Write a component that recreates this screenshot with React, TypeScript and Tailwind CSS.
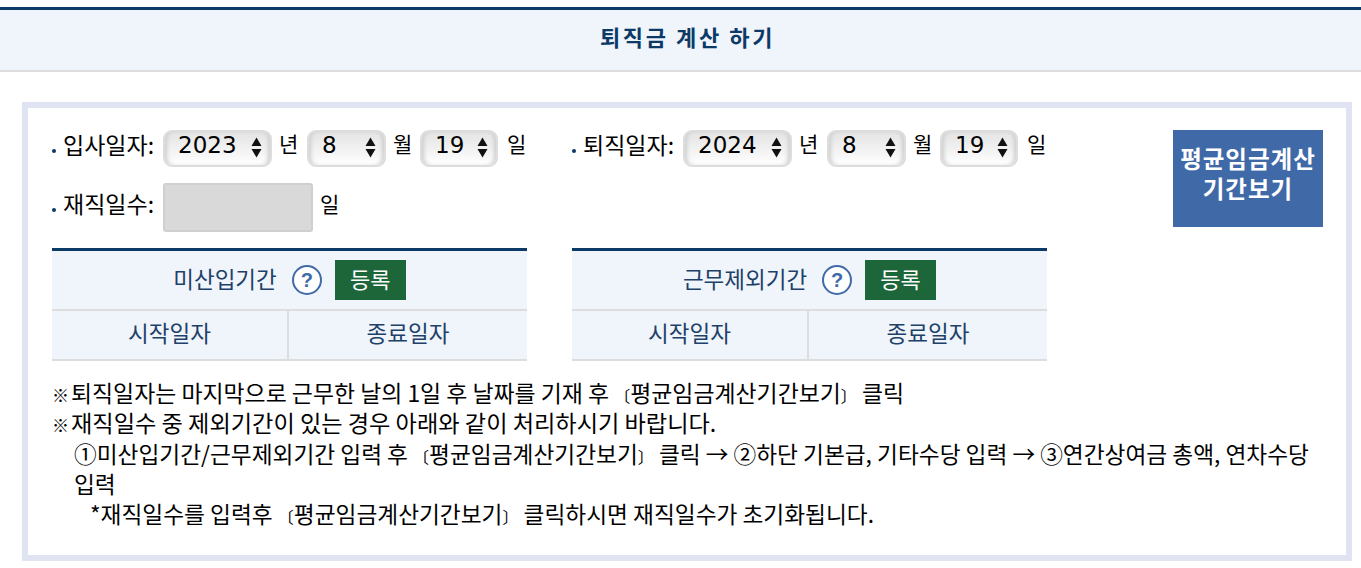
import React from "react";

const years = ["2023", "2024"];

function DateSelect({ value, width }: { value: string; width: string }) {
    return (
        <div className={`relative h-[37px] ${width} rounded-[9px] border-2 border-[#dddddd] bg-gradient-to-b from-[#e4e4e4] via-[#f1f1f1] to-white shadow-[inset_4px_0_4px_-2px_#cdcdcd,inset_-4px_0_4px_-2px_#cdcdcd]`}>
            <select
                defaultValue={value}
                className="h-full w-full appearance-none bg-transparent pb-[6px] pl-[13px] font-['DejaVu_Sans',sans-serif] text-[23px] leading-none text-black outline-none"
            >
                <option value={value}>{value}</option>
            </select>
            <svg className="pointer-events-none absolute right-[8px] top-[5px]" width="11" height="21" viewBox="0 0 11 21">
                <path d="M5.5 0.5 L10.5 9 L0.5 9 Z M0.5 12 L10.5 12 L5.5 20.5 Z" fill="#111" />
            </svg>
        </div>
    );
}

function DateField({ label, year }: { label: string; year: string }) {
    return (
        <div className="flex h-[37px] items-center">
            <span className="mr-[7px] mt-[4px] h-[4px] w-[4px] rounded-full bg-[#0b3a66]" />
            <span className="mb-[9px] w-[100px] text-[23px] leading-none">{label}</span>
            <DateSelect value={year} width="w-[109px]" />
            <span className="mb-[10px] ml-[7px] w-[28px] text-[21px] leading-none">년</span>
            <DateSelect value="8" width="w-[79px]" />
            <span className="mb-[10px] ml-[7px] w-[27px] text-[21px] leading-none">월</span>
            <DateSelect value="19" width="w-[78px]" />
            <span className="mb-[10px] ml-[9px] text-[21px] leading-none">일</span>
        </div>
    );
}

function PeriodTable({ title }: { title: string }) {
    return (
        <div className="border-t-[3px] border-[#0b3a66] bg-[#f0f4fb] text-[#1d4168]">
            <div className="flex h-[60px] items-center justify-center border-b-2 border-[#dddddd]">
                <span className="mb-[4px] text-[22.5px] leading-none">{title}</span>
                <span className="ml-[15px] flex h-[30px] w-[30px] items-center justify-center rounded-full border-2 border-[#4069a8] bg-white font-['Liberation_Sans',sans-serif] text-[20px] font-bold leading-none text-[#4069a8]">?</span>
                <button className="ml-[13px] h-[40px] w-[71px] bg-[#1c6639] pb-[4px] text-[22px] leading-none text-white">등록</button>
            </div>
            <div className="grid h-[50px] grid-cols-[237px_1fr] border-b-2 border-[#dddddd] pb-[4px] text-[22.5px]">
                <div className="-mb-[4px] flex items-center justify-center border-r-2 border-[#dddddd] pb-[4px]">시작일자</div>
                <div className="flex items-center justify-center">종료일자</div>
            </div>
        </div>
    );
}

// the 〔 〕 glyphs are much narrower in the reference
function Bracketed({ children }: { children: React.ReactNode }) {
    return (
        <>
            <span className="text-[16px] leading-none">〔</span>
            {children}
            <span className="text-[16px] leading-none">〕</span>
        </>
    );
}

export default function App() {
    return (
        <div className="h-[568px] overflow-hidden bg-white pt-[7px] font-['Noto_Sans_CJK_KR',sans-serif] text-black">
            <div className="flex h-[65px] items-center justify-center border-y-[3px] border-t-[#0b3a66] border-b-[#dddddd] bg-[#f0f4fb] [border-bottom-width:2px]">
                <h1 className="mb-[9px] ml-[14px] text-[22px] font-bold leading-none tracking-[2.6px] text-[#0b3a66]">퇴직금 계산 하기</h1>
            </div>

            <div className="ml-[22px] mr-[9px] mt-[30px] h-[459px] border-[6px] border-[#e0e4f2] pl-[24px] pr-[23px] pt-[22px]">
                <div className="flex items-start justify-between">
                    <div className="w-[995px]">
                        <div className="grid grid-cols-[475px_475px] gap-x-[45px]">
                            <DateField label="입사일자:" year={years[0]} />
                            <DateField label="퇴직일자:" year={years[1]} />
                        </div>
                        <div className="mt-[16px] flex h-[49px] items-center">
                            <span className="mr-[7px] mt-[4px] h-[4px] w-[4px] rounded-full bg-[#0b3a66]" />
                            <span className="mb-[8px] w-[100px] text-[23px] leading-none">재직일수:</span>
                            <div className="h-[49px] w-[150px] rounded-[3px] border-2 border-[#cfcfcf] bg-[#d9d9d9]" />
                            <span className="mb-[8px] ml-[7px] text-[21px] leading-none">일</span>
                        </div>
                        <div className="mt-[16px] grid grid-cols-[475px_475px] gap-x-[45px]">
                            <PeriodTable title="미산입기간" />
                            <PeriodTable title="근무제외기간" />
                        </div>
                    </div>
                    <button className="h-[97px] w-[150px] bg-[#4069a8] pb-[11px] text-[23.5px] font-bold leading-[30px] tracking-[1px] text-white">
                        평균임금계산
                        <br />
                        기간보기
                    </button>
                </div>

                <div className="mt-[16px] text-[23px] leading-[30px] text-black [word-break:keep-all]">
                    <p className="text-[22.9px]"><span className="mr-[2px] text-[17px] leading-none">※</span>퇴직일자는 마지막으로 근무한 날의 1일 후 날짜를 기재 후 <Bracketed>평균임금계산기간보기</Bracketed> 클릭</p>
                    <p className="text-[23.2px]"><span className="mr-[2px] text-[17px] leading-none">※</span>재직일수 중 제외기간이 있는 경우 아래와 같이 처리하시기 바랍니다.</p>
                    <p className="mt-[2px] pl-[22px] text-[22.7px]">①미산입기간/근무제외기간 입력 후 <Bracketed>평균임금계산기간보기</Bracketed> 클릭 → ②하단 기본급, 기타수당 입력 → ③연간상여금 총액, 연차수당 입력</p>
                    <p className="pl-[38px] text-[22.7px]">*재직일수를 입력후 <Bracketed>평균임금계산기간보기</Bracketed> 클릭하시면 재직일수가 초기화됩니다.</p>
                </div>
            </div>
        </div>
    );
}
